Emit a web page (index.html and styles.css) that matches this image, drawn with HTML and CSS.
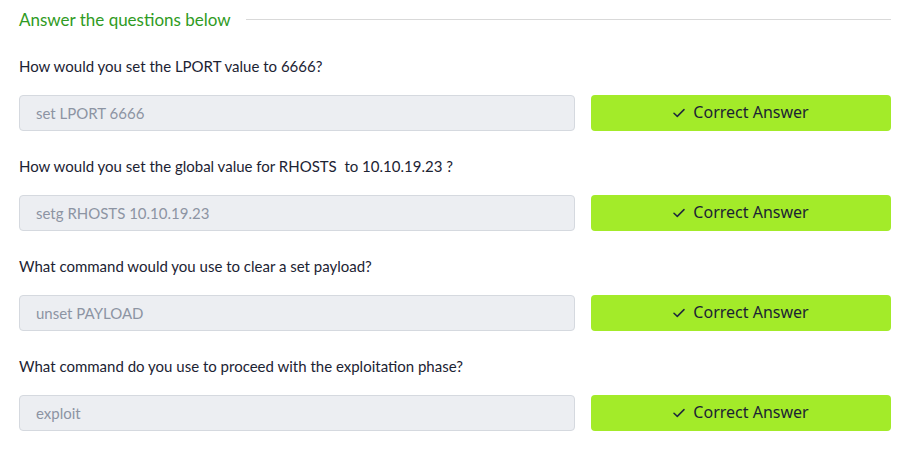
FILE: index.html
```html
<!DOCTYPE html>
<html>
<head>
<meta charset="utf-8">
<link rel="stylesheet" href="styles.css">
</head>
<body>
<div class="panel">
  <div class="heading">
    <span class="heading-text">Answer the questions below</span>
    <span class="heading-line"></span>
  </div>
  <div class="question">
    <p class="q-text">How would you set the LPORT value to 6666?</p>
    <div class="answer-row">
      <div class="answer-input">set LPORT 6666</div>
      <button class="answer-btn"><svg class="check" viewBox="0 0 12 10" width="12" height="10"><path d="M1 5.2 L4.3 8.4 L11 1.6" fill="none" stroke="#1f2a3c" stroke-width="1.5" stroke-linecap="round" stroke-linejoin="round"/></svg>Correct Answer</button>
    </div>
  </div>
  <div class="question">
    <p class="q-text">How would you set the global value for RHOSTS&nbsp; to 10.10.19.23 ?</p>
    <div class="answer-row">
      <div class="answer-input">setg RHOSTS 10.10.19.23</div>
      <button class="answer-btn"><svg class="check" viewBox="0 0 12 10" width="12" height="10"><path d="M1 5.2 L4.3 8.4 L11 1.6" fill="none" stroke="#1f2a3c" stroke-width="1.5" stroke-linecap="round" stroke-linejoin="round"/></svg>Correct Answer</button>
    </div>
  </div>
  <div class="question">
    <p class="q-text">What command would you use to clear a set payload?</p>
    <div class="answer-row">
      <div class="answer-input">unset PAYLOAD</div>
      <button class="answer-btn"><svg class="check" viewBox="0 0 12 10" width="12" height="10"><path d="M1 5.2 L4.3 8.4 L11 1.6" fill="none" stroke="#1f2a3c" stroke-width="1.5" stroke-linecap="round" stroke-linejoin="round"/></svg>Correct Answer</button>
    </div>
  </div>
  <div class="question">
    <p class="q-text">What command do you use to proceed with the exploitation phase?</p>
    <div class="answer-row">
      <div class="answer-input">exploit</div>
      <button class="answer-btn"><svg class="check" viewBox="0 0 12 10" width="12" height="10"><path d="M1 5.2 L4.3 8.4 L11 1.6" fill="none" stroke="#1f2a3c" stroke-width="1.5" stroke-linecap="round" stroke-linejoin="round"/></svg>Correct Answer</button>
    </div>
  </div>
</div>
</body>
</html>
```
FILE: styles.css
```css
* { box-sizing: border-box; }
html, body { margin: 0; padding: 0; background: #ffffff; }
body {
  font-family: Lato, "Noto Sans", sans-serif;
  color: #1c2333;
}
.panel {
  width: 872px;
  margin-left: 19px;
  padding-top: 7px;
}
.heading {
  display: flex;
  align-items: center;
  height: 24px;
}
.heading-text {
  color: #2f9b23;
  font-size: 17px;
}
.heading-line {
  flex: 1;
  height: 1px;
  background: #d9d9d9;
  margin-left: 15px;
}
.question { margin-top: 23px; }
.q-text {
  margin: 0;
  font-size: 15px;
  line-height: 24px;
  height: 24px;
}
.answer-row {
  display: flex;
  gap: 16px;
  margin-top: 17px;
}
.answer-input {
  flex: 0 0 556px;
  height: 36px;
  background: #eceef2;
  border: 1px solid #d5d9df;
  border-radius: 4px;
  padding-left: 16px;
  display: flex;
  align-items: center;
  font-size: 15px;
  color: #8c94a3;
}
.answer-btn {
  flex: 1;
  height: 36px;
  border: none;
  border-radius: 4px;
  background: #a3eb29;
  display: flex;
  align-items: center;
  justify-content: center;
  gap: 8px;
  font-family: "Noto Sans", sans-serif;
  font-size: 16px;
  color: #1c2333;
  padding: 0 0 2px 0;
}
.check { display: block; margin-top: 2px; }
```
